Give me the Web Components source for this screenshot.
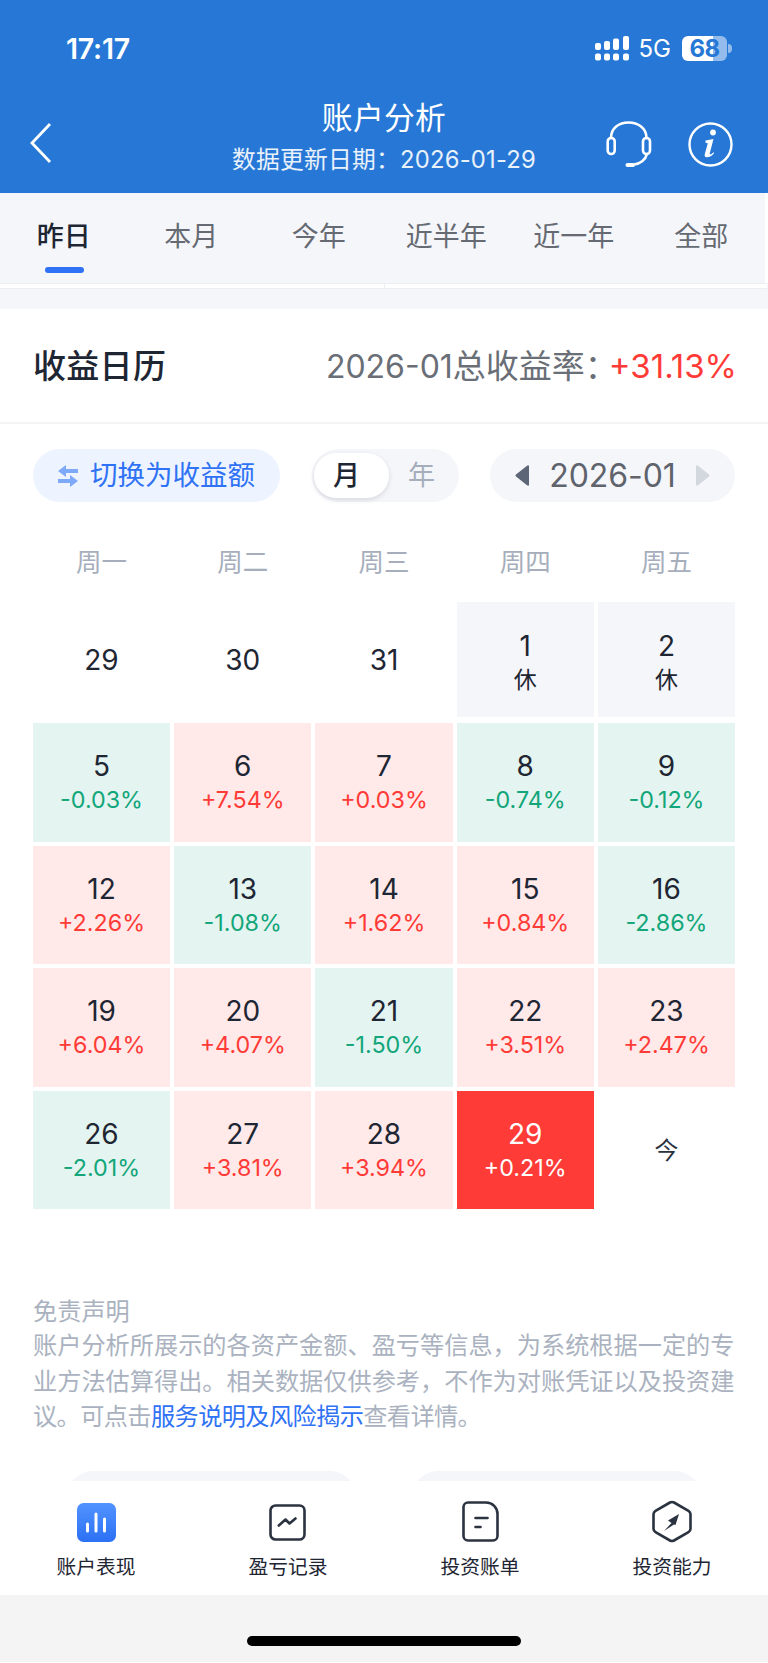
<!DOCTYPE html>
<html lang="zh"><head><meta charset="utf-8"><title>账户分析</title>
<style>
html,body{margin:0;padding:0;background:#fff;}
body{font-family:Inter,"Noto Sans CJK SC",sans-serif;width:768px;height:1663px;overflow:hidden;}
</style></head><body>
<app-page>
  <app-top>
    <status-bar></status-bar>
    <title-bar title="账户分析" sub="数据更新日期：2026-01-29"></title-bar>
  </app-top>
  <tab-bar></tab-bar>
  <app-main>
    <strip-row></strip-row>
    <cal-head></cal-head>
    <cal-controls></cal-controls>
    <cal-grid></cal-grid>
    <disclaimer-note></disclaimer-note>
    <peek-row></peek-row>
  </app-main>
  <bottom-nav></bottom-nav>
  <home-bar></home-bar>
</app-page>
<script>
const el=(name,css,html)=>customElements.define(name,class extends HTMLElement{
  connectedCallback(){ if(this.shadowRoot)return;
    const s=this.attachShadow({mode:'open'});
    s.innerHTML='<style>'+css+'</style>'+(typeof html==='function'?html(this):html);
  }});
el('app-page',':host{display:flex;flex-direction:column;width:768px;height:1663px;overflow:hidden;background:#fff}','<slot></slot>');
el('app-top',':host{display:block;height:193px;background:#2778d6;color:#fff}','<slot></slot>');
el('status-bar',`:host{display:flex;align-items:center;height:97px;box-sizing:border-box;padding:0 36px 0 66px;color:#fff}
 .t{font:600 28.500px/1 Inter,sans-serif;letter-spacing:-.2px;flex:1;padding-top:2px}
 .g{font:400 24px/1 Inter,sans-serif;margin:0 11px 0 10px}
 .b{position:relative;width:45px;height:25px;border-radius:6px;background:linear-gradient(90deg,#fff 0 69%,#93bcec 69% 100%);color:#2778d6;font:700 24px/25px Inter,sans-serif;text-align:center;letter-spacing:-.5px}
 .c{width:4px;height:9px;margin-left:1px;background:#93bcec;border-radius:0 4px 4px 0}`,
 `<span class="t">17:17</span>
 <svg width="34" height="25" viewBox="0 0 34 25" fill="#fff"><rect x="0" y="7" width="6" height="7" rx="2"/><rect x="9" y="5" width="6" height="9" rx="2"/><rect x="18" y="2.500" width="6" height="11.500" rx="2"/><rect x="28" y="0" width="6" height="14" rx="2"/><rect x="0" y="17.500" width="6" height="7" rx="2"/><rect x="9" y="17.500" width="6" height="7" rx="2"/><rect x="18" y="17.500" width="6" height="7" rx="2"/><rect x="28" y="17.500" width="6" height="7" rx="2"/></svg>
 <span class="g">5G</span><span class="b">68</span><span class="c"></span>`);
el('title-bar',`:host{display:block;position:relative;height:96px;text-align:center;color:#fff}
 .a{font:400 30.800px/40px Inter,"Noto Sans CJK SC",sans-serif;padding-top:1px;letter-spacing:.3px}
 .b{font:400 23.800px/30px Inter,"Noto Sans CJK SC",sans-serif;margin-top:7px;letter-spacing:.2px;color:#e9f1fb}
 svg{position:absolute}`,
 h=>`<div class="a">${h.getAttribute('title')}</div><div class="b">${h.getAttribute('sub')}</div>
 <svg style="left:29px;top:25px" width="24" height="42" viewBox="0 0 24 42" fill="none" stroke="#fff" stroke-width="2.800"><path d="M21 2 L3 21 L21 40"/></svg>
 <svg style="left:606px;top:24px" width="46" height="47" viewBox="0 0 46 47" fill="none" stroke="#fff" stroke-width="2.600" stroke-linecap="round"><rect x="1.700" y="17" width="7" height="16" rx="3.500"/><rect x="37" y="17" width="7" height="16" rx="3.500"/><path d="M5 17C5 7 13 1.500 22.500 1.500S40.500 7 40.500 17"/><path d="M41 33C39.500 39 34 43 28 43.500"/><path d="M21.500 44H27" stroke-width="4"/></svg>
 <svg style="left:688px;top:25px" width="45" height="45" viewBox="0 0 45 45" fill="none"><circle cx="22.500" cy="22.500" r="21" stroke="#fff" stroke-width="2.400"/><circle cx="25" cy="10.500" r="2.900" fill="#fff"/><path d="M17.500 18.500L25.500 17L21.800 31C21.500 32.500 22.500 32.800 23.500 32L25.500 30.300L26 31.300C24 33.800 21.500 35.300 19 35.300C17 35.300 16.300 34 16.800 32L19.800 21.300L17.500 20.800Z" fill="#fff"/></svg>`);
el('tab-bar',`:host{display:grid;grid-template-columns:repeat(6,127.500px);height:90px;background:#f5f6fa;border-right:3px solid #fff;width:765px}
 div{position:relative;text-align:center;font:400 27px/88px Inter,"Noto Sans CJK SC",sans-serif;color:#666a72}
 .on{color:#1f2633;font-weight:500}
 .on::after{content:"";position:absolute;left:44.600px;top:74px;width:39px;height:6px;border-radius:3px;background:#2f72f5}`,
 ['昨日','本月','今年','近半年','近一年','全部'].map((t,i)=>`<div class="${i?'':'on'}">${t}</div>`).join(''));
el('app-main',':host{display:block;flex:1;min-height:0;overflow:hidden;background:#fff}','<slot></slot>');
el('strip-row',`:host{display:grid;grid-template-columns:1fr 1fr;height:26px;background:#f5f6fa;box-sizing:border-box;padding-right:1px}
 div{height:6px;background:#fff;border-top:1px solid #eeeff3;border-bottom:1px solid #eeeff3;box-sizing:border-box}
 div+div{border-left:1px solid #eeeff3}`,'<div></div><div></div>');
el('cal-head',`:host{display:flex;align-items:center;justify-content:space-between;height:115px;box-sizing:border-box;padding:2px 33px 0;border-bottom:2px solid #f3f4f6}
 .h{font:500 33px/1 Inter,"Noto Sans CJK SC",sans-serif;color:#1f2633;letter-spacing:.3px}
 .r{font:400 32px/1 Inter,"Noto Sans CJK SC",sans-serif;color:#6a6e76;display:flex;align-items:center;margin-right:-2px}
 .r i{font-style:normal;font-size:33px}
 .r b{font-weight:400;color:#ff3b37;font-size:33px;margin-left:-9px}`,
 `<span class="h">收益日历</span><span class="r">2026-01<i>总收益率：</i><b>+31.13%</b></span>`);
el('cal-controls',`:host{display:flex;align-items:stretch;height:53px;margin:25px 33px 0}
 .p{display:flex;align-items:center;border-radius:27px;box-sizing:border-box}
 .sw{width:247px;background:#edf4ff;color:#2f72f5;font:400 27.500px/1 Inter,"Noto Sans CJK SC",sans-serif;padding-left:25px;gap:12px}
 .seg{width:147px;margin-left:32px;background:#f5f6fa;padding:4px 2px;font:400 27px/1 Inter,"Noto Sans CJK SC",sans-serif;color:#a6aebc}
 .seg span{flex:0 0 75px;text-align:center;align-self:stretch;display:flex;align-items:center;justify-content:center}
 .seg .on{background:#fff;color:#1f2633;border-radius:22px;font-weight:500;box-shadow:0 2px 5px rgba(30,40,60,.14);padding-right:10px;flex-basis:65px}
 .seg .off{flex:1;padding-right:3px}
 .dt{width:245px;margin-left:31px;background:#f5f6fa;color:#5f636c;font:400 32px/1 Inter,sans-serif;justify-content:center;gap:19px;letter-spacing:-.1px}`,
 `<div class="p sw"><svg width="20" height="22" viewBox="0 0 20 22" fill="#7ea9f8"><path d="M0 6L8 0V4H20V8H8V12Z"/><path d="M20 16L12 22V18H0V14H12V10Z"/></svg><span>切换为收益额</span></div>
 <div class="p seg"><span class="on">月</span><span class="off">年</span></div>
 <div class="p dt"><svg width="15" height="21" viewBox="0 0 15 21" fill="#5d6676"><path d="M14 1V20C14 21 13 21 12 20.300L1 11.500C.3 11 .3 10 1 9.500L12 .7C13 0 14 0 14 1Z"/></svg><span>2026-01</span><svg width="15" height="21" viewBox="0 0 15 21" fill="#d3d7de"><path d="M1 1V20C1 21 2 21 3 20.300L14 11.500C14.700 11 14.700 10 14 9.500L3 .7C2 0 1 0 1 1Z"/></svg></div>`);
el('day-cell',`:host{display:flex;flex-direction:column;align-items:center;justify-content:center;min-width:0;text-align:center;color:#1f2633;box-sizing:border-box;padding-top:1px}
 :host([k=up]){background:#ffe9e9}:host([k=dn]){background:#e4f4f0}:host([k=off]){background:#f5f6fa;height:115px;align-self:start;padding-top:7px}
 :host([k=plain]){height:115px;align-self:start;padding-top:0}
 :host([k=now]){background:#ff3b37;color:#fff}
 :host([k=today]) .n{font-size:24px;color:#2b3240}
 .n{font:400 28px/34px Inter,"Noto Sans CJK SC",sans-serif}
 .v{font:400 23.300px/33px Inter,"Noto Sans CJK SC",sans-serif;color:#1f2633}
 :host([k=up]) .v{color:#ff3b37}:host([k=dn]) .v{color:#12a67a}:host([k=now]) .v{color:#fff}
 .x{font-size:23px;line-height:34px}`,
 h=>`<div class="n">${h.getAttribute('n')}</div>`+(h.hasAttribute('v')?`<div class="v ${h.getAttribute('k')==='off'?'x':''}">${h.getAttribute('v')}</div>`:''));
el('cal-grid',`:host{display:block;margin:0 33px}
 .w{display:grid;grid-template-columns:repeat(5,1fr);gap:4.200px;height:100px;box-sizing:border-box;padding-top:19px;align-items:center;font:400 25.500px/1 Inter,"Noto Sans CJK SC",sans-serif;color:#a6aebc;text-align:center}
 .g{display:grid;grid-template-columns:repeat(5,1fr);gap:4px 4.200px;grid-template-rows:117px repeat(4,118.600px)}`,
 ()=>{const w=['周一','周二','周三','周四','周五'].map(t=>`<span>${t}</span>`).join('');
 const d=[['29','plain'],['30','plain'],['31','plain'],['1','off','休'],['2','off','休'],
 ['5','dn','-0.03%'],['6','up','+7.54%'],['7','up','+0.03%'],['8','dn','-0.74%'],['9','dn','-0.12%'],
 ['12','up','+2.26%'],['13','dn','-1.08%'],['14','up','+1.62%'],['15','up','+0.84%'],['16','dn','-2.86%'],
 ['19','up','+6.04%'],['20','up','+4.07%'],['21','dn','-1.50%'],['22','up','+3.51%'],['23','up','+2.47%'],
 ['26','dn','-2.01%'],['27','up','+3.81%'],['28','up','+3.94%'],['29','now','+0.21%'],['今','today']];
 return `<div class="w">${w}</div><div class="g">`+d.map(c=>`<day-cell n="${c[0]}" k="${c[1]}"${c[2]?` v="${c[2]}"`:''}></day-cell>`).join('')+`</div>`;});
el('disclaimer-note',`:host{display:block;margin:84.600px 33px 0;width:702px;font:400 24.200px/35.500px Inter,"Noto Sans CJK SC",sans-serif;color:#aab2c0}
 .h{margin-bottom:-1px}
 .t{letter-spacing:-.6px}
 a{color:#2f72f5;text-decoration:none}`,
 `<div class="h">免责声明</div><div>账户分析所展示的各资产金额、盈亏等信息，为系统根据一定的专<br>业方法估算得出。相关数据仅供参考，不作为对账凭证以及投资建<br><span class="t">议。可点击<a>服务说明及风险揭示</a>查看详情。</span></div>`);
el('peek-row',`:host{display:flex;justify-content:space-between;margin:36px 67px 0}
 i{display:block;width:289px;height:40px;border-radius:26px 26px 0 0;background:#f5f6fa}`,'<i></i><i></i>');
el('nav-item',`:host{display:flex;flex-direction:column;align-items:center;height:114px;box-sizing:border-box}
 .i{height:60px;display:flex;align-items:flex-end}
 .l{font:400 19.800px/26px Inter,"Noto Sans CJK SC",sans-serif;color:#1f2633;margin-top:13px}`,
 h=>`<div class="i"><slot></slot></div><div class="l">${h.getAttribute('label')}</div>`);
el('bottom-nav',`:host{display:grid;grid-template-columns:repeat(4,192px);height:114px;background:#fff;flex:none}`,
 `<nav-item label="账户表现"><svg width="39" height="39" viewBox="0 0 39 39" style="margin-bottom:-1px"><defs><linearGradient id="g" x1="0" y1="0" x2="0" y2="1"><stop offset="0" stop-color="#5293ff"/><stop offset="1" stop-color="#2c70f4"/></linearGradient></defs><rect width="39" height="39" rx="6.500" fill="url(#g)"/><g stroke="#fff" stroke-width="3" stroke-linecap="round"><path d="M10.500 21V28"/><path d="M19 11V28"/><path d="M27.500 16V28"/></g></svg></nav-item>
 <nav-item label="盈亏记录"><svg width="37" height="37" viewBox="0 0 37 37" fill="none" stroke="#2b3240" stroke-width="2.600" stroke-linecap="round" stroke-linejoin="round" style="margin-bottom:0;position:relative;left:-.5px"><rect x="1.500" y="1.500" width="34" height="34" rx="5"/><path d="M9.800 21.500L16.500 15.500L20.500 19.500L26.500 14.500"/></svg></nav-item>
 <nav-item label="投资账单"><svg width="37" height="41" viewBox="0 0 37 41" fill="none" stroke="#2b3240" stroke-width="2.600" stroke-linecap="round" stroke-linejoin="round" style="margin-bottom:-1px"><path d="M6 1.500H24C30.500 1.500 35.500 6.500 35.500 13V35C35.500 37.500 33.500 39.500 31 39.500H6C3.500 39.500 1.500 37.500 1.500 35V6C1.500 3.500 3.500 1.500 6 1.500Z"/><path d="M13.500 17H25.500"/><path d="M13.500 26H18.500"/></svg></nav-item>
 <nav-item label="投资能力"><svg width="40" height="43" viewBox="0 0 40 43" fill="none" style="margin-bottom:-2px"><path d="M18 2.500L3.500 10.800C2.300 11.500 1.500 12.800 1.500 14.200V28.800C1.500 30.200 2.300 31.500 3.500 32.200L18 40.500C19.300 41.200 20.700 41.200 22 40.500L36.500 32.200C37.700 31.500 38.500 30.200 38.500 28.800V14.200C38.500 12.800 37.700 11.500 36.500 10.800L22 2.500C20.700 1.800 19.300 1.800 18 2.500Z" stroke="#2b3240" stroke-width="2.600"/><path d="M27 14L16 20.500L19.500 23L12 31L22 24.500L23.500 25Z" fill="#2b3240"/></svg></nav-item>`);
el('home-bar',`:host{display:block;height:68px;background:#f4f4f5;flex:none;padding-top:41px;box-sizing:border-box;border-bottom:1px solid #fff}
 i{display:block;width:274px;height:10px;border-radius:5px;background:#000;margin:0 auto}`,'<i></i>');
</script>
</body></html>
